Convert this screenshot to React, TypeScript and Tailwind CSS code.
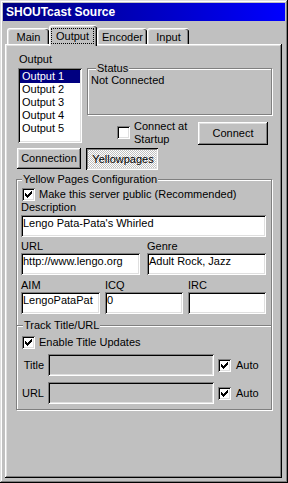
import type { ReactNode } from 'react';

const raised = 'shadow-[inset_-1px_-1px_#000,inset_1px_1px_#fff,inset_-2px_-2px_#808080,inset_2px_2px_#dfdfdf]';
const pressed = 'shadow-[inset_1px_1px_#000,inset_-1px_-1px_#fff,inset_2px_2px_#808080,inset_-2px_-2px_#dfdfdf]';
const sunken = 'shadow-[inset_1px_1px_#808080,inset_-1px_-1px_#fff,inset_2px_2px_#000,inset_-2px_-2px_#dfdfdf]';
const etched = 'border border-[#808080] shadow-[1px_1px_0_#fff,inset_1px_1px_0_#fff]';

function Check() {
  return (
    <svg width="7" height="7" viewBox="0 0 7 7" shapeRendering="crispEdges">
      <path d="M0 2h1v3H0z M1 3h1v3H1z M2 4h1v3H2z M3 3h1v3H3z M4 2h1v3H4z M5 1h1v3H5z M6 0h1v3H6z" fill="#000" />
    </svg>
  );
}

function Checkbox({ checked, className = '' }: { checked?: boolean; className?: string }) {
  return (
    <div className={`w-[13px] h-[13px] shrink-0 bg-white p-[3px] ${sunken} ${className}`}>
      {checked && <Check />}
    </div>
  );
}

function Field({ value = '', width, disabled, className = '' }: { value?: string; width: string; disabled?: boolean; className?: string }) {
  return (
    <div className={`${width} h-[22px] shrink-0 pl-[2px] pt-[2px] whitespace-nowrap overflow-hidden ${disabled ? 'bg-[#c0c0c0]' : 'bg-white'} ${sunken} ${className}`}>
      {value}
    </div>
  );
}

function Tab({ label, width, selected }: { label: string; width: string; selected?: boolean }) {
  const edge = 'border-t border-l border-white rounded-t-[3px] bg-[#c0c0c0] shadow-[inset_-1px_0_#000,inset_-2px_0_#808080,inset_1px_1px_#dfdfdf]';
  if (selected) {
    return (
      <div className={`${width} h-[21px] -mb-[2px] relative z-10 flex pl-[1px] pt-[2px] ${edge}`}>
        <div className="w-[43px] h-[16px] border border-dotted border-black flex items-center justify-center">{label}</div>
      </div>
    );
  }
  return <div className={`${width} h-[16px] flex justify-center pt-[2px] ${edge}`}>{label}</div>;
}

function Group({ label, labelMl, className = '', children }: { label: string; labelMl: string; className?: string; children?: ReactNode }) {
  return (
    <div className={`flex flex-col shrink-0 ${etched} ${className}`}>
      <div className={`-mt-[7px] ${labelMl} self-start h-[13px] px-[1px] bg-[#c0c0c0]`}>{label}</div>
      {children}
    </div>
  );
}

const outputs = ['Output 1', 'Output 2', 'Output 3', 'Output 4', 'Output 5'];

export default function App() {
  return (
    <div className="w-[288px] h-[483px] p-[3px] flex flex-col bg-[#c0c0c0] text-black text-[11px] leading-[13px] font-['Liberation_Sans',Arial,sans-serif] shadow-[inset_-1px_-1px_#000,inset_1px_1px_#dfdfdf,inset_-2px_-2px_#808080,inset_2px_2px_#fff]">
      <div className="h-[18px] shrink-0 flex items-center pl-[3px] bg-linear-to-r from-[#000080] to-[#0000ff] text-white font-bold text-[12px]">
        SHOUTcast Source
      </div>

      <div className="h-[23px] shrink-0 flex items-end pl-[4px]">
        <Tab label="Main" width="w-[42px]" />
        <Tab label="Output" width="w-[48px]" selected />
        <Tab label="Encoder" width="w-[50px]" />
        <Tab label="Input" width="w-[42px]" />
      </div>

      <div className={`ml-[2px] w-[277px] h-[434px] shrink-0 flex flex-col pt-[9px] pl-[13px] shadow-[inset_-1px_-1px_#000,inset_1px_1px_#fff,inset_-2px_-2px_#808080,inset_2px_2px_#dfdfdf]`}>
        <div className="flex">
          <div className="flex flex-col w-[64px]">
            <div className="h-[15px] pl-[1px]">Output</div>
            <div className={`h-[75px] p-[2px] flex flex-col bg-white ${sunken}`}>
              {outputs.map((o, i) => (
                <div key={o} className={`h-[13px] pl-[2px] ${i === 0 ? 'bg-[#000080] text-white' : ''}`}>{o}</div>
              ))}
            </div>
          </div>

          <div className="ml-[5px] mt-[15px] w-[186px] flex flex-col">
            <Group label="Status" labelMl="ml-[8px]" className="w-[185px] h-[47px]">
              <div className="pl-[3px] -mt-[1px]">Not Connected</div>
            </Group>
            <div className="mt-[7px] h-[23px] flex">
              <Checkbox className="ml-[30px] mt-[4px]" />
              <div className="ml-[4px] -mt-[2px]">Connect at<br />Startup</div>
              <button type="button" className={`ml-auto mr-[5px] w-[70px] h-[23px] pb-[1px] ${raised}`}>Connect</button>
            </div>
          </div>
        </div>

        <div className="mt-[3px] -ml-[1px] flex">
          <button type="button" className={`w-[64px] h-[21px] ${raised}`}>Connection</button>
          <button type="button" className={`ml-[5px] w-[72px] h-[22px] pl-[2px] pt-[1px] bg-[image:repeating-conic-gradient(#fff_0_25%,#c0c0c0_0_50%)] bg-[length:2px_2px] ${pressed}`}>Yellowpages</button>
        </div>

        <Group label="Yellow Pages Configuration" labelMl="ml-[5px]" className="mt-[9px] -ml-[2px] w-[256px] h-[231px]">
          <div className="mt-[2px] pl-[5px] flex items-center">
            <Checkbox checked />
            <span className="ml-[4px]">Make this server <span className="underline">p</span>ublic (Recommended)</span>
          </div>
          <div className="pl-[4px] h-[13px]">Description</div>
          <Field value="Lengo Pata-Pata's Whirled" width="w-[245px]" className="mt-[1px] ml-[4px]" />

          <div className="mt-[3px] pl-[4px] h-[13px] flex">
            <span className="w-[126px]">URL</span>
            <span>Genre</span>
          </div>
          <div className="ml-[4px] flex">
            <Field value="http://www.lengo.org" width="w-[119px]" />
            <Field value="Adult Rock, Jazz" width="w-[119px]" className="ml-[7px]" />
          </div>

          <div className="mt-[4px] pl-[4px] h-[13px] flex">
            <span className="w-[84px]">AIM</span>
            <span className="w-[83px]">ICQ</span>
            <span>IRC</span>
          </div>
          <div className="ml-[4px] flex">
            <Field value="LengoPataPat" width="w-[79px]" />
            <Field value="0" width="w-[78px]" className="ml-[5px]" />
            <Field width="w-[78px]" className="ml-[5px]" />
          </div>

          <div className="mt-[11px] flex flex-col border-t border-[#808080] shadow-[inset_0_1px_0_#fff]">
            <div className="-mt-[7px] ml-[6px] self-start h-[13px] px-[1px] bg-[#c0c0c0]">Track Title/URL</div>
            <div className="mt-[4px] pl-[5px] flex items-center">
              <Checkbox checked />
              <span className="ml-[4px]">Enable Title Updates</span>
            </div>
            <div className="mt-[5px] flex items-center">
              <span className="w-[27px] text-right">Title</span>
              <Field width="w-[166px]" disabled className="ml-[4px]" />
              <Checkbox checked className="ml-[4px]" />
              <span className="ml-[5px]">Auto</span>
            </div>
            <div className="mt-[6px] flex items-center">
              <span className="w-[27px] text-right">URL</span>
              <Field width="w-[166px]" disabled className="ml-[4px]" />
              <Checkbox checked className="ml-[4px]" />
              <span className="ml-[5px]">Auto</span>
            </div>
          </div>
        </Group>
      </div>
    </div>
  );
}
